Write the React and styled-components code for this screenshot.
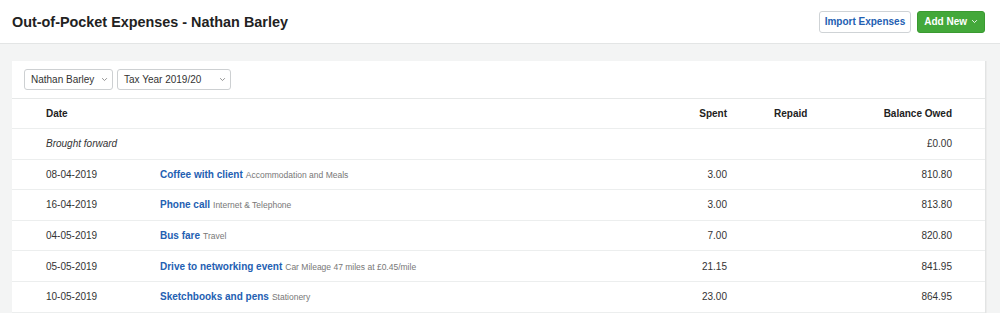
import React from 'react';
import styled, { createGlobalStyle } from 'styled-components';

const GlobalStyle = createGlobalStyle`
  html, body {
    margin: 0;
    padding: 0;
    background: #f3f4f4;
    font-family: "Liberation Sans", Arial, sans-serif;
    color: #222;
  }
`;

const TopBar = styled.header`
  display: flex;
  align-items: center;
  justify-content: space-between;
  height: 43px;
  padding: 0 15px 0 12px;
  background: #fff;
  border-bottom: 1px solid #e3e5e5;
`;

const Title = styled.h1`
  margin: 0;
  font-size: 14.4px;
  font-weight: bold;
  color: #222;
`;

const Actions = styled.div`
  display: flex;
  gap: 6px;
`;

const Button = styled.button`
  display: inline-flex;
  align-items: center;
  gap: 4px;
  height: 22px;
  padding: 0 ${p => (p.$primary ? 6 : 5)}px;
  font-family: inherit;
  font-size: 10px;
  font-weight: bold;
  border-radius: 3px;
  cursor: pointer;
  border: 1px solid ${p => (p.$primary ? '#3a9a31' : '#cfd3d6')};
  background: ${p => (p.$primary ? '#43a83a' : '#fff')};
  color: ${p => (p.$primary ? '#fff' : '#2360b2')};
`;

const Main = styled.main`
  padding: 17px 15px 0 12px;
`;

const Card = styled.section`
  background: #fff;
  box-shadow: 1px 0 0 #e2e4e4, 2px 0 0 #ececec;
`;

const Filters = styled.div`
  display: flex;
  gap: 4px;
  padding: 8px 12px 8px;
  border-bottom: 1px solid #e6e8e8;
`;

const Select = styled.div`
  display: flex;
  align-items: center;
  justify-content: space-between;
  box-sizing: border-box;
  width: ${p => p.$w}px;
  height: 21px;
  padding: 0 4px 0 6px;
  border: 1px solid #cdd0d2;
  border-radius: 3px;
  font-size: 10px;
  color: #333;
`;

const Row = styled.div`
  display: grid;
  grid-template-columns: 114px 1fr 100px 100px 125px;
  align-items: center;
  box-sizing: border-box;
  height: ${p => (p.$head ? 30 : 30.6)}px;
  padding: 0 33px 0 34px;
  border-bottom: 1px solid #eceeee;
  font-size: 10px;
  color: #333;
  font-weight: ${p => (p.$head ? 'bold' : 'normal')};
  ${p => p.$head && 'color: #222;'}
`;

const Cell = styled.div`
  text-align: ${p => p.$align || 'left'};
  white-space: nowrap;
  font-style: ${p => (p.$italic ? 'italic' : 'normal')};
  ${p => p.$pad && `padding-left: ${p.$pad}px;`}
`;

const Link = styled.a`
  color: #2360b2;
  font-weight: bold;
  text-decoration: none;
`;

const Category = styled.span`
  color: #777;
  font-size: 8.5px;
  margin-left: 3px;
`;

const Chevron = ({ color = '#888', size = 7 }) => (
  <svg width={size} height={size} viewBox="0 0 10 10" fill="none">
    <path d="M2 3.5 L5 6.5 L8 3.5" stroke={color} strokeWidth="1.3" strokeLinecap="round" strokeLinejoin="round" />
  </svg>
);

const rows = [
  { date: '08-04-2019', title: 'Coffee with client', cat: 'Accommodation and Meals', spent: '3.00', bal: '810.80' },
  { date: '16-04-2019', title: 'Phone call', cat: 'Internet & Telephone', spent: '3.00', bal: '813.80' },
  { date: '04-05-2019', title: 'Bus fare', cat: 'Travel', spent: '7.00', bal: '820.80' },
  { date: '05-05-2019', title: 'Drive to networking event', cat: 'Car Mileage 47 miles at £0.45/mile', spent: '21.15', bal: '841.95' },
  { date: '10-05-2019', title: 'Sketchbooks and pens', cat: 'Stationery', spent: '23.00', bal: '864.95' },
];

export default function App() {
  return (
    <>
      <GlobalStyle />
      <TopBar>
        <Title>Out-of-Pocket Expenses - Nathan Barley</Title>
        <Actions>
          <Button>Import Expenses</Button>
          <Button $primary>
            Add New <Chevron color="#fff" />
          </Button>
        </Actions>
      </TopBar>
      <Main>
        <Card>
          <Filters>
            <Select $w={89}>
              Nathan Barley <Chevron />
            </Select>
            <Select $w={114}>
              Tax Year 2019/20 <Chevron />
            </Select>
          </Filters>
          <Row $head>
            <Cell>Date</Cell>
            <Cell />
            <Cell $align="right">Spent</Cell>
            <Cell $pad={47}>Repaid</Cell>
            <Cell $align="right">Balance Owed</Cell>
          </Row>
          <Row>
            <Cell $italic>Brought forward</Cell>
            <Cell />
            <Cell />
            <Cell />
            <Cell $align="right">£0.00</Cell>
          </Row>
          {rows.map(r => (
            <Row key={r.date + r.title}>
              <Cell>{r.date}</Cell>
              <Cell>
                <Link href="#">{r.title}</Link>
                <Category>{r.cat}</Category>
              </Cell>
              <Cell $align="right">{r.spent}</Cell>
              <Cell />
              <Cell $align="right">{r.bal}</Cell>
            </Row>
          ))}
        </Card>
      </Main>
    </>
  );
}
